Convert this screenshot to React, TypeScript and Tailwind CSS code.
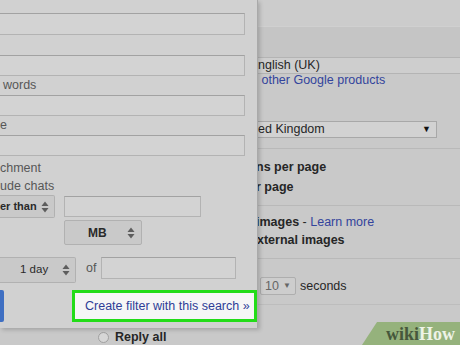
import React from "react";

function UpDown() {
  return (
    <svg width="8" height="12" viewBox="0 0 8 12" className="shrink-0">
      <path d="M4 0.5 L7.5 5 L0.5 5 Z" fill="#5d5d5d" />
      <path d="M4 11.5 L7.5 7 L0.5 7 Z" fill="#5d5d5d" />
    </svg>
  );
}

function Input({ className }: { className: string }) {
  return (
    <div
      className={
        "bg-[#d3d3d3] border border-[#b3b3b3] border-t-[#a2a2a2] " + className
      }
    />
  );
}

export default function App() {
  return (
    <div className="relative w-[460px] h-[345px] overflow-hidden bg-[#c9c9c9] font-['Liberation_Sans',Arial,sans-serif] text-[12.5px] text-[#262626]">
      {/* underlying settings page */}
      <div className="flex flex-col">
        <div className="h-[26px] bg-[#cccccc]" />
        <div className="h-[31px] bg-[#c5c5c5] border-t border-[#d0d0d0]" />
        <div className="h-[17px] flex items-center bg-[#cecece] border-y border-[#b4b4b4] whitespace-nowrap">
          <span className="w-[258px] shrink-0 text-right overflow-hidden">E</span>
          <span>nglish (UK)</span>
        </div>
        <div className="h-[13px] flex items-center whitespace-nowrap text-[#33449c]">
          <span className="w-[258px] shrink-0 text-right overflow-hidden">
            Change language settings for
          </span>
          <span>{"\u00A0"}other Google products</span>
        </div>
        <div className="h-[34px]" />
        <div className="h-[17px] flex items-center whitespace-nowrap">
          <span className="w-[258px] shrink-0 text-right overflow-hidden">Unit</span>
          <span className="w-[179px] h-[17px] flex items-center justify-between pr-[5px] bg-[#d2d2d2] border-y border-r border-[#a8a8a8]">
            <span>ed Kingdom</span>
            <span className="text-[9px] text-[#111]">▼</span>
          </span>
        </div>
        <div className="h-[10px]" />
        <div className="h-px bg-[#b9b9b9]" />
        <div className="h-[8px]" />
        <div className="h-[20px] flex items-center font-bold whitespace-nowrap">
          <span className="w-[256px] shrink-0 text-right overflow-hidden">
            Show 50 conversatio
          </span>
          <span>ns per page</span>
        </div>
        <div className="h-[20px] flex items-center font-bold whitespace-nowrap">
          <span className="w-[256px] shrink-0 text-right overflow-hidden">
            Show 100 contacts pe
          </span>
          <span>r page</span>
        </div>
        <div className="h-[8px]" />
        <div className="h-px bg-[#b9b9b9]" />
        <div className="h-[7px]" />
        <div className="h-[18px] flex items-center whitespace-nowrap">
          <span className="w-[256px] shrink-0 text-right overflow-hidden font-bold">
            Always display external
          </span>
          <span className="font-bold">images</span>
          <span>{"\u00A0"}-{"\u00A0"}</span>
          <span className="text-[#33449c]">Learn more</span>
        </div>
        <div className="h-[18px] flex items-center font-bold whitespace-nowrap">
          <span className="w-[257px] shrink-0 text-right overflow-hidden">
            Ask before displaying e
          </span>
          <span>xternal images</span>
        </div>
        <div className="h-[9px]" />
        <div className="h-px bg-[#b9b9b9]" />
        <div className="h-[18px]" />
        <div className="h-[18px] flex items-center whitespace-nowrap">
          <div className="ml-[260px] w-[36px] h-[18px] flex items-center justify-between px-[4px] bg-[#cdcdcd] border border-[#aeaeae] rounded-[2px] text-[#666]">
            <span>10</span>
            <span className="text-[8px]">▼</span>
          </div>
          <span className="ml-[4px]">seconds</span>
        </div>
        <div className="h-[9px]" />
        <div className="h-px bg-[#bdbdbd]" />
        <div className="h-[26px]" />
        <div className="h-[12px] flex items-center pl-[98px] whitespace-nowrap">
          <span className="w-[11px] h-[11px] rounded-full border border-[#a0a0a0] bg-[#d6d6d6]" />
          <span className="ml-[6px] font-bold">Reply all</span>
        </div>
      </div>

      {/* search options popup */}
      <div className="absolute left-0 top-0 w-[258px] h-[328px] bg-[#d1d1d1] border-r border-[#a9a9a9] shadow-[2px_2px_4px_rgba(0,0,0,0.18)] flex flex-col pt-[13px] text-[#575757] whitespace-nowrap">
        <Input className="w-[245px] h-[22px] border-l-0" />
        <div className="h-[20px]" />
        <Input className="w-[245px] h-[21px] border-l-0" />
        <div className="h-[19px] flex items-center pl-[3px]">words</div>
        <Input className="w-[245px] h-[21px] border-l-0" />
        <div className="h-[19px] flex items-center">e</div>
        <Input className="w-[245px] h-[21px] border-l-0" />
        <div className="h-[3px]" />
        <div className="h-[18px] flex items-center">chment</div>
        <div className="h-[18px] flex items-center">ude chats</div>
        <div className="flex items-start gap-[9px]">
          <div className="w-[55px] h-[23px] flex items-center justify-between pr-[5px] bg-[#c9c9c9] border border-l-0 border-[#b1b1b1] rounded-r-[2px] font-bold text-[11px] text-[#2a2a2a]">
            <span>er than</span>
            <UpDown />
          </div>
          <div className="flex flex-col gap-[3px] pt-[1px]">
            <Input className="w-[137px] h-[21px]" />
            <div className="w-[78px] h-[25px] flex items-center justify-between pl-[23px] pr-[6px] bg-[#c9c9c9] border border-[#b1b1b1] rounded-[2px] font-bold text-[12px] text-[#2a2a2a]">
              <span>MB</span>
              <UpDown />
            </div>
          </div>
        </div>
        <div className="h-[12px]" />
        <div className="flex items-start">
          <div className="w-[76px] h-[26px] flex items-center justify-between pl-[20px] pr-[5px] bg-[#c9c9c9] border border-l-0 border-[#b1b1b1] rounded-r-[2px] text-[11.5px] text-[#2a2a2a]">
            <span>1 day</span>
            <UpDown />
          </div>
          <span className="ml-[10px] h-[22px] flex items-center">of</span>
          <Input className="ml-[5px] w-[135px] h-[22px]" />
        </div>
        <div className="h-[7px]" />
        <div className="flex items-start">
          <div className="w-[4px] h-[32px] bg-[#3f6fc2] rounded-r-[2px]" />
          <div className="ml-[68px] w-[186px] h-[32px] flex items-center pl-[10px] bg-[#f6f6f6] border-[3px] border-[#23dc18] text-[#2e3d96]">
            Create filter with this search »
          </div>
        </div>
      </div>

      {/* wikiHow watermark */}
      <div className="absolute right-0 bottom-0 w-[100px] h-[23px]">
        <svg width="100" height="23" className="absolute inset-0">
          <polygon points="17,0 100,0 100,23 2,23" fill="#95b27c" />
        </svg>
        <div className="absolute left-[26px] top-[1px] font-['Liberation_Serif',serif] font-bold text-[18px] leading-[22px]">
          <span className="text-[#46573b]">wiki</span>
          <span className="text-[#eef3e7]">How</span>
        </div>
      </div>
    </div>
  );
}
